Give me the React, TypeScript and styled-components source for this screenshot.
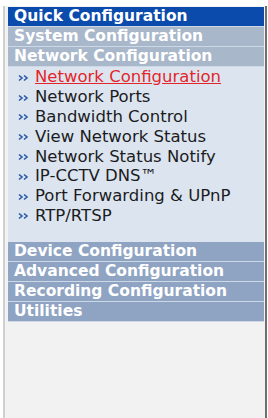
import { createGlobalStyle, styled } from 'styled-components';

interface IMenuItem {
  label: string;
  active?: boolean;
}

const networkItems: IMenuItem[] = [
  { label: 'Network Configuration', active: true },
  { label: 'Network Ports' },
  { label: 'Bandwidth Control' },
  { label: 'View Network Status' },
  { label: 'Network Status Notify' },
  { label: 'IP-CCTV DNS™' },
  { label: 'Port Forwarding & UPnP' },
  { label: 'RTP/RTSP' },
];

const lowerSections = ['Device Configuration', 'Advanced Configuration', 'Recording Configuration', 'Utilities'];

function Chevrons() {
  return (
    <Style.Chevrons viewBox="0 0 12 8" width="12" height="8">
      <path d="M1 1.5 L4 4 L1 6.5" />
      <path d="M6 1.5 L9 4 L6 6.5" />
    </Style.Chevrons>
  );
}

export default function App() {
  return (
    <>
      <GlobalStyle />
      <Style.Panel>
        <Style.Header variant="quick">Quick Configuration</Style.Header>
        <Style.Header variant="open">System Configuration</Style.Header>
        <Style.Header variant="open">Network Configuration</Style.Header>
        <Style.ItemList>
          {networkItems.map(({ label, active }) => (
            <Style.Item key={label}>
              <Chevrons />
              <Style.ItemLink active={active}>{label}</Style.ItemLink>
            </Style.Item>
          ))}
        </Style.ItemList>
        {lowerSections.map((name) => (
          <Style.Header key={name} variant="closed">
            {name}
          </Style.Header>
        ))}
      </Style.Panel>
    </>
  );
}

const GlobalStyle = createGlobalStyle`
  html, body {
    margin: 0;
    background: #ffffff;
  }
  body {
    font-family: "DejaVu Sans", Verdana, sans-serif;
  }
`;

const headerColors = {
  quick: '#0b4bac',
  open: '#a9b7cb',
  closed: '#8fa4c3',
};

const Style = {
  Panel: styled.div`
    box-sizing: border-box;
    margin: 6px 1px 0 3px;
    height: 412px;
    padding: 1px 1px 0 3px;
    background: #f2f2f2;
    border-left: 2px solid #cfcfcf;
    border-right: 2px solid #6f6f6f;
  `,

  Header: styled.div<{ variant: 'quick' | 'open' | 'closed' }>`
    height: 19px;
    line-height: 19px;
    padding-left: 6px;
    border-bottom: 1px solid #cdd8e6;
    background: ${(props) => headerColors[props.variant]};
    color: #ffffff;
    font-size: 15.5px;
    font-weight: bold;
    white-space: nowrap;
    overflow: hidden;
  `,

  ItemList: styled.div`
    display: flex;
    flex-direction: column;
    padding: 0 0 17px 10px;
    background: #dce5ef;
  `,

  Item: styled.div`
    display: flex;
    align-items: center;
    gap: 5px;
    height: 19.8px;
    white-space: nowrap;
  `,

  Chevrons: styled.svg`
    fill: none;
    stroke: #2a5aa8;
    stroke-width: 1.6;
    flex-shrink: 0;
    margin-top: 2px;
  `,

  ItemLink: styled.span<{ active?: boolean }>`
    font-size: 16.5px;
    color: ${(props) => (props.active ? '#e3262b' : '#1b1b22')};
    text-decoration: ${(props) => (props.active ? 'underline' : 'none')};
  `,
};
